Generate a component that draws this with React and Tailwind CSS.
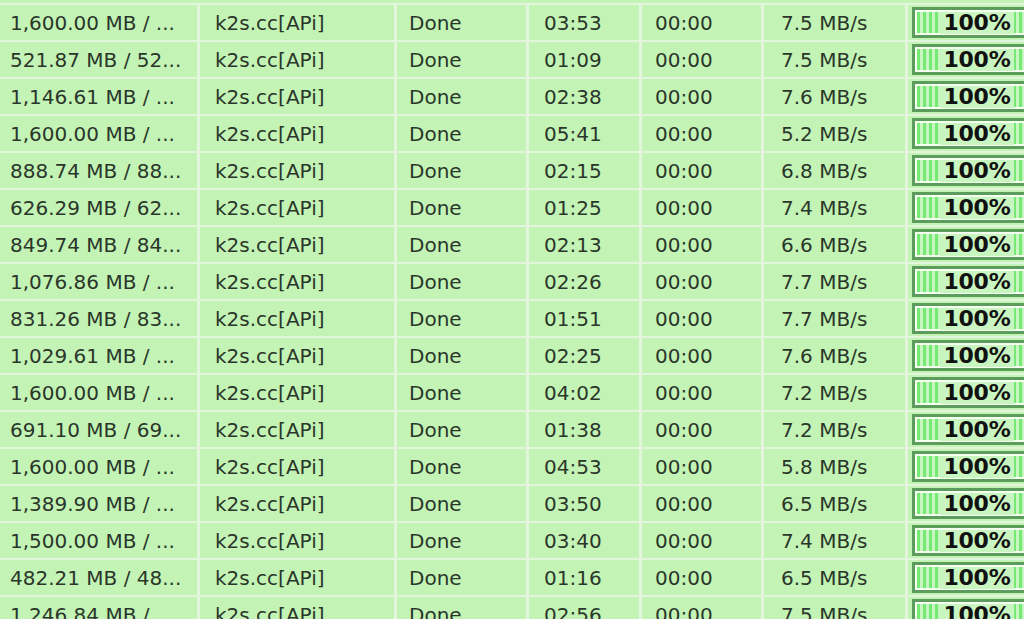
import React from 'react';

const rows = [
  ['1,600.00 MB / ...', '03:53', '7.5 MB/s'],
  ['521.87 MB / 52...', '01:09', '7.5 MB/s'],
  ['1,146.61 MB / ...', '02:38', '7.6 MB/s'],
  ['1,600.00 MB / ...', '05:41', '5.2 MB/s'],
  ['888.74 MB / 88...', '02:15', '6.8 MB/s'],
  ['626.29 MB / 62...', '01:25', '7.4 MB/s'],
  ['849.74 MB / 84...', '02:13', '6.6 MB/s'],
  ['1,076.86 MB / ...', '02:26', '7.7 MB/s'],
  ['831.26 MB / 83...', '01:51', '7.7 MB/s'],
  ['1,029.61 MB / ...', '02:25', '7.6 MB/s'],
  ['1,600.00 MB / ...', '04:02', '7.2 MB/s'],
  ['691.10 MB / 69...', '01:38', '7.2 MB/s'],
  ['1,600.00 MB / ...', '04:53', '5.8 MB/s'],
  ['1,389.90 MB / ...', '03:50', '6.5 MB/s'],
  ['1,500.00 MB / ...', '03:40', '7.4 MB/s'],
  ['482.21 MB / 48...', '01:16', '6.5 MB/s'],
  ['1,246.84 MB / ...', '02:56', '7.5 MB/s'],
];

function Progress() {
  return (
    <div className="h-[31px] mt-[2px] ml-[4px] w-[130px] border-[3px] border-[#5c9c5c] p-[2px] bg-[#f4fff0]">
      <div className="h-full flex items-center justify-center bg-[repeating-linear-gradient(90deg,#74ea74_0_3px,#c9f5c0_3px_6px)]">
        <span className="px-[4px] bg-[#c9f5c0] text-[22px] font-bold text-[#111] leading-none tracking-[-0.3px]">100%</span>
      </div>
    </div>
  );
}

export default function App() {
  return (
    <div className="w-[1024px] h-[619px] overflow-hidden bg-[#c3f4b5] pt-[3px] text-[20px] text-[#2b362b] font-['DejaVu_Sans',sans-serif]">
      {rows.map((r, i) => (
        <div key={i} className="flex h-[37px] border-t-[2px] border-[#e3f5dc]">
          <div className="w-[200px] shrink-0 pl-[10px] flex items-center whitespace-nowrap overflow-hidden border-r-[3px] border-[#e3f5dc]">{r[0]}</div>
          <div className="w-[197px] shrink-0 pl-[15px] flex items-center border-r-[3px] border-[#e3f5dc]">k2s.cc[APi]</div>
          <div className="w-[132px] shrink-0 pl-[12px] flex items-center border-r-[3px] border-[#e3f5dc]">Done</div>
          <div className="w-[113px] shrink-0 pl-[15px] flex items-center border-r-[3px] border-[#e3f5dc]">{r[1]}</div>
          <div className="w-[122px] shrink-0 pl-[13px] flex items-center border-r-[3px] border-[#e3f5dc]">00:00</div>
          <div className="w-[144px] shrink-0 pl-[17px] flex items-center border-r-[3px] border-[#e3f5dc] whitespace-nowrap">{r[2]}</div>
          <div className="flex-1 overflow-hidden">
            <Progress />
          </div>
        </div>
      ))}
    </div>
  );
}
